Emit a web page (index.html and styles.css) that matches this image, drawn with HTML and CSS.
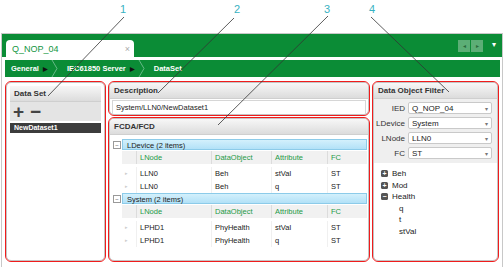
FILE: index.html
```html
<!DOCTYPE html>
<html lang="en">
<head>
    <meta charset="UTF-8">
    <title>Data Set</title>
    <link rel="stylesheet" href="styles.css">
</head>
<body>
    <!-- callout numbers over the screenshot -->
    <svg class="callouts" width="504" height="268" viewBox="0 0 504 268">
        <g class="nums">
            <text x="120" y="13">1</text>
            <text x="234" y="13">2</text>
            <text x="324" y="13">3</text>
            <text x="369" y="13">4</text>
        </g>
        <g class="leaders">
            <line x1="124" y1="17" x2="48" y2="96"/>
            <line x1="234" y1="18" x2="158" y2="93"/>
            <line x1="328" y1="16" x2="218" y2="125"/>
            <line x1="371" y1="17" x2="449" y2="92"/>
        </g>
    </svg>

    <div class="window">
        <div class="tabbar">
            <div class="tab">
                <span>Q_NOP_04</span>
                <span class="tab-close">×</span>
            </div>
            <div class="tab-nav">
                <span class="nav-btn">◂</span>
                <span class="nav-btn">▸</span>
            </div>
            <span class="tab-menu">▾</span>
        </div>

        <div class="breadcrumb">
            <span class="crumb">General <i class="arrow">▶</i></span>
            <svg class="sep" width="8" height="17" viewBox="0 0 8 17"><polyline points="1,0 6,8.5 1,17"/></svg>
            <span class="crumb">IEC61850 Server <i class="arrow">▶</i></span>
            <svg class="sep" width="8" height="17" viewBox="0 0 8 17"><polyline points="1,0 6,8.5 1,17"/></svg>
            <span class="crumb">DataSet</span>
        </div>

        <div class="panels">
            <!-- data sets -->
            <div class="panel dataset">
                <div class="panel-head">Data Set</div>
                <div class="toolbar">
                    <span class="tool">+</span>
                    <span class="tool">−</span>
                </div>
                <div class="ds-item">NewDataset1</div>
            </div>

            <div class="middle">
                <div class="panel desc">
                    <div class="panel-head">Description</div>
                    <div class="desc-body">
                        <div class="desc-input">System/LLN0/NewDataset1</div>
                    </div>
                </div>

                <div class="panel fcda">
                    <div class="panel-head">FCDA/FCD</div>
                    <div class="grid-body">
                        <div class="group">
                            <span class="collapse">−</span>
                            <div class="group-band">LDevice (2 items)</div>
                        </div>
                        <div class="row head">
                            <span></span><span>LNode</span><span>DataObject</span><span>Attribute</span><span>FC</span>
                        </div>
                        <div class="row">
                            <span class="mark">▸</span><span>LLN0</span><span>Beh</span><span>stVal</span><span>ST</span>
                        </div>
                        <div class="row">
                            <span class="mark">▸</span><span>LLN0</span><span>Beh</span><span>q</span><span>ST</span>
                        </div>

                        <div class="group">
                            <span class="collapse">−</span>
                            <div class="group-band">System (2 items)</div>
                        </div>
                        <div class="row head">
                            <span></span><span>LNode</span><span>DataObject</span><span>Attribute</span><span>FC</span>
                        </div>
                        <div class="row">
                            <span class="mark">▸</span><span>LPHD1</span><span>PhyHealth</span><span>stVal</span><span>ST</span>
                        </div>
                        <div class="row">
                            <span class="mark">▸</span><span>LPHD1</span><span>PhyHealth</span><span>q</span><span>ST</span>
                        </div>
                    </div>
                </div>
            </div>

            <!-- filter -->
            <div class="panel filter">
                <div class="panel-head">Data Object Filter</div>
                <div class="filter-form">
                    <label>IED</label><div class="select">Q_NOP_04</div>
                    <label>LDevice</label><div class="select">System</div>
                    <label>LNode</label><div class="select">LLN0</div>
                    <label>FC</label><div class="select">ST</div>
                </div>
                <ul class="tree">
                    <li><span class="node">+</span>Beh</li>
                    <li><span class="node">+</span>Mod</li>
                    <li><span class="node">−</span>Health</li>
                    <li class="leaf">q</li>
                    <li class="leaf">t</li>
                    <li class="leaf">stVal</li>
                </ul>
            </div>
        </div>
    </div>
</body>
</html>
```

FILE: styles.css
```css
body {
    margin: 0;
    width: 504px;
    height: 268px;
    font-family: "Liberation Sans", Arial, sans-serif;
    font-size: 8px;
    color: #222;
    background: white;
    position: relative;
    overflow: hidden;
}

.callouts {
    position: absolute;
    left: 0;
    top: 0;
    z-index: 5;
    pointer-events: none;
}

.callouts .nums text {
    font-family: "Liberation Sans", Arial, sans-serif;
    font-size: 11px;
    fill: #38b2c2;
}

.callouts .leaders line {
    stroke: #333;
    stroke-width: 0.8;
}

.window {
    margin: 33px 1px 0 1px;
    height: 233px;
    border: 1px solid #c8c8c8;
    border-bottom: none;
}

/* tab strip */
.tabbar {
    height: 23px;
    background: #0b8c36;
    display: flex;
    align-items: flex-end;
    padding-left: 4px;
    padding-right: 6px;
}

.tab {
    width: 128px;
    height: 17px;
    box-sizing: border-box;
    background: white;
    border-radius: 4px 4px 0 0;
    display: flex;
    align-items: center;
    justify-content: space-between;
    padding: 0 4px 0 6px;
    color: #13963f;
    font-size: 9px;
}

.tab-close {
    color: #aaa;
    font-size: 9px;
}

.tab-nav {
    margin-left: auto;
    align-self: center;
    display: flex;
    gap: 1px;
}

.nav-btn {
    width: 12px;
    height: 12px;
    background: #5cae76;
    color: #2a6b3c;
    font-size: 6px;
    line-height: 12px;
    text-align: center;
}

.tab-menu {
    align-self: center;
    color: white;
    font-size: 8px;
    margin-left: 9px;
    margin-bottom: 3px;
}

/* breadcrumb */
.breadcrumb {
    margin: 3px 2px 0 3px;
    height: 17px;
    background: #0b8c36;
    display: flex;
    align-items: center;
    padding-left: 6px;
    color: white;
    font-weight: bold;
    font-size: 7.5px;
}

.crumb {
    display: flex;
    align-items: center;
}

.arrow {
    font-style: normal;
    color: #111;
    font-size: 6px;
    margin-left: 4px;
}

.sep {
    margin: 0 8px 0 3px;
}

.sep polyline {
    fill: none;
    stroke: #7cc49a;
    stroke-width: 0.8;
}

/* panels */
.panels {
    display: grid;
    grid-template-columns: 99px 260px 125px;
    column-gap: 4px;
    margin: 5px 0 0 4px;
    height: 179px;
}

.middle {
    display: flex;
    flex-direction: column;
    gap: 3px;
    min-height: 0;
}

.panel {
    border: 1px solid #c4c4c4;
    border-radius: 5px;
    outline: 1.5px solid #f01c1c;
    outline-offset: 0.5px;
    background: white;
    overflow: hidden;
    box-sizing: border-box;
}

.panel-head {
    height: 15px;
    line-height: 15px;
    padding-left: 4px;
    font-weight: bold;
    color: #333;
    background: linear-gradient(#f7f7f7, #dcdcdc);
    border-bottom: 1px solid #cfcfcf;
}

.dataset .panel-head {
    margin: 3px 3px 0 3px;
}

.toolbar {
    margin: 0 3px;
    height: 19px;
    background: #e4e4e4;
    display: flex;
    align-items: center;
    gap: 6px;
    padding-left: 3px;
}

.tool {
    font-size: 19px;
    font-weight: bold;
    color: #444;
    line-height: 1;
}

.ds-item {
    margin: 2px 3px 0 3px;
    height: 10px;
    line-height: 10px;
    background: #3c3c3c;
    color: white;
    font-weight: bold;
    font-size: 7px;
    padding-left: 4px;
}

.desc {
    height: 33px;
    flex: none;
}

.desc-body {
    padding: 1px 2px;
}

.desc-input {
    height: 13px;
    line-height: 13px;
    border: 1px solid #d6d6d6;
    padding-left: 3px;
    font-size: 7.5px;
}

.fcda {
    flex: 1;
}

.grid-body {
    padding: 4px 1px 0 3px;
}

.group {
    display: flex;
    align-items: center;
    height: 11px;
    margin-bottom: 1px;
}

.collapse {
    width: 6px;
    height: 6px;
    border: 1px solid #999;
    font-size: 6px;
    line-height: 6px;
    text-align: center;
    color: #555;
    margin: 0 1px 0 0;
}

.group-band {
    flex: 1;
    height: 11px;
    line-height: 11px;
    box-sizing: border-box;
    background: linear-gradient(#d3f0fc, #b2e1f7);
    border: 1px solid #8ccbe9;
    padding-left: 4px;
    color: #222;
    font-size: 7.5px;
}

.row {
    display: grid;
    grid-template-columns: 14px 75px 60px 56px 1fr;
    margin-left: 9px;
    height: 13px;
    line-height: 13px;
    font-size: 7.5px;
}

.row span {
    padding-left: 3px;
    border-left: 1px solid #f0f0f0;
}

.row span:first-child {
    border-left: none;
}

.row.head {
    background: #f1f1f1;
    color: #1d9a47;
    margin-top: 1px;
    margin-bottom: 3px;
}

.row.head span {
    border-left: 1px solid #dcdcdc;
}

.row.head span:first-child {
    border-left: none;
}

.mark {
    color: #ccc;
    font-size: 5px;
}

/* filter */
.filter-form {
    background: #efefef;
    display: grid;
    grid-template-columns: 31px 1fr;
    column-gap: 3px;
    row-gap: 3px;
    padding: 3px 5px 4px 0;
    align-items: center;
}

.filter-form label {
    text-align: right;
    color: #333;
}

.select {
    height: 12px;
    line-height: 12px;
    box-sizing: border-box;
    background: white;
    border: 1px solid #c9c9c9;
    border-radius: 2px;
    padding-left: 3px;
    color: #222;
    position: relative;
}

.select::after {
    content: "▾";
    position: absolute;
    right: 3px;
    top: 0;
    color: #777;
    font-size: 6px;
}

.tree {
    list-style: none;
    margin: 5px 0 0 0;
    padding: 0 0 0 7px;
}

.tree li {
    height: 11.5px;
    line-height: 11.5px;
    display: flex;
    align-items: center;
}

.node {
    width: 7px;
    height: 7px;
    background: #555;
    border-radius: 1.5px;
    color: white;
    font-size: 7px;
    line-height: 7px;
    text-align: center;
    font-weight: bold;
    margin-right: 4px;
}

.tree .leaf {
    padding-left: 18px;
}
```
